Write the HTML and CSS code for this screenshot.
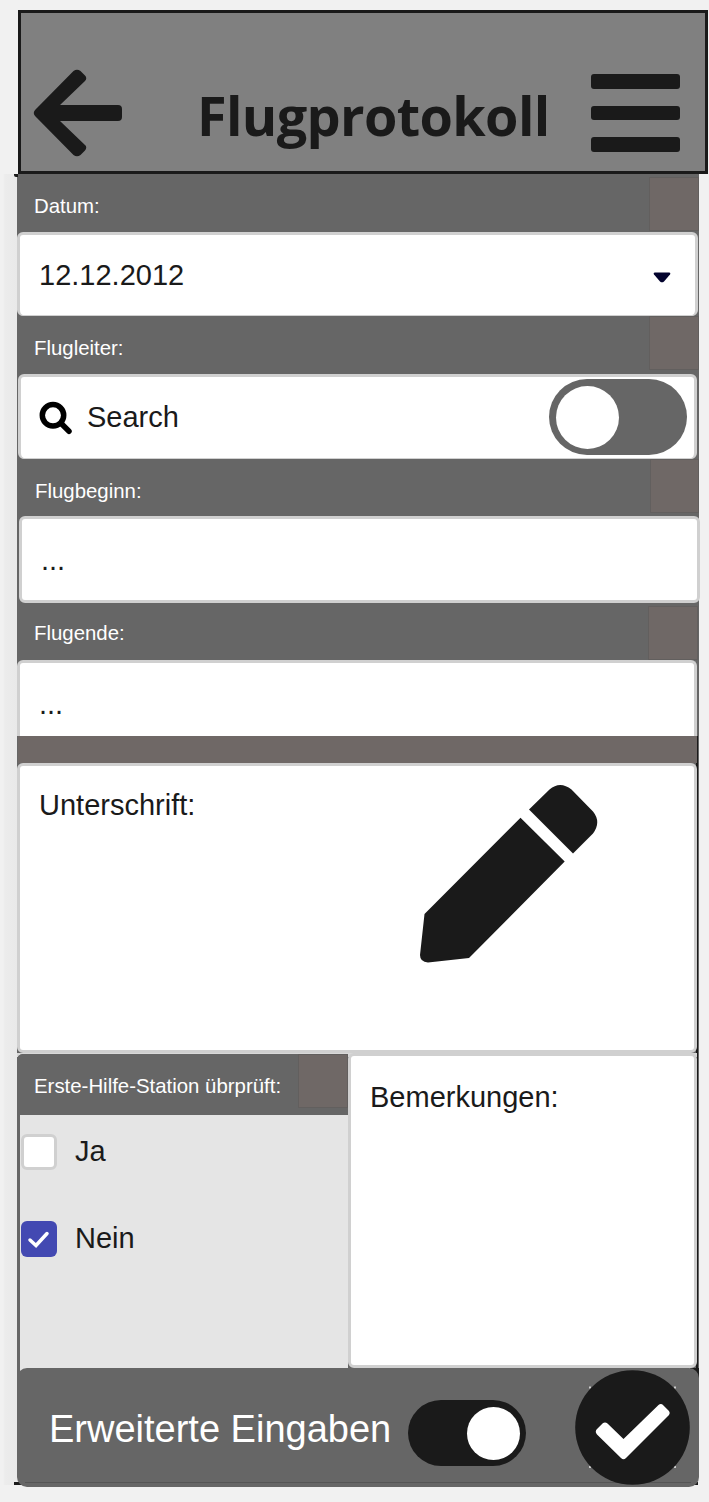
FILE: index.html
```html
<!DOCTYPE html>
<html lang="de">
<head>
<meta charset="utf-8">
<title>Flugprotokoll</title>
<link rel="stylesheet" href="styles.css">
</head>
<body>
<div class="app">
  <header class="header">
    <svg class="back" viewBox="33 68 90 90"><path d="M60 105 85 81Q87.500 78 85 75.500L80.500 71Q77 68.500 73.500 71L35.500 109.500Q32 113 35.500 116.500L73.500 155Q77 157.500 80.500 155L85 150.500Q87.500 147 85 145L60 121H118Q122 121 122 117V109Q122 105 118 105Z"/></svg>
    <h1 class="title">Flugprotokoll</h1>
    <div class="menu"><i class="bar"></i><i class="bar"></i><i class="bar"></i></div>
  </header>
  <main class="form">
    <div class="label label-date"><span>Datum:</span><i class="swatch"></i></div>
    <div class="field field-date"><span>12.12.2012</span>
      <svg class="caret" viewBox="0 0 18 11"><path d="M2 .5H16Q18 .7 17 2.500L11 9.500Q9 11.200 7 9.500L1 2.500Q0 .7 2 .5Z"/></svg>
    </div>
    <div class="label label-lead"><span>Flugleiter:</span><i class="swatch"></i></div>
    <div class="field field-lead">
      <svg class="search" viewBox="0 0 34 34"><circle cx="14" cy="14.300" r="10.700"/><path d="M22 22.300 30 30.300"/></svg>
      <span>Search</span>
      <div class="toggle"><i class="knob"></i></div>
    </div>
    <div class="label label-start"><span>Flugbeginn:</span><i class="swatch"></i></div>
    <div class="field field-start"><span>...</span></div>
    <div class="label label-end"><span>Flugende:</span><i class="swatch"></i></div>
    <div class="field field-end"><span>...</span></div>
    <div class="lower">
      <div class="divider"></div>
      <div class="field signature"><span>Unterschrift:</span>
        <svg class="pencil" viewBox="419 784 180 180"><path d="M424.500 914 520.500 817.800 564.700 861.500 469 958 428 962.500Q420 962 420 955ZM529 809.500 549.500 789.500Q560 780.500 571.500 789.500L593 811.500Q601.500 822 593 833.500L573 853.500Z"/></svg>
      </div>
      <div class="split">
        <section class="aid">
          <div class="label label-aid"><span>Erste-Hilfe-Station übrprüft:</span><i class="swatch"></i></div>
          <div class="options">
            <div class="option"><i class="box"></i><span>Ja</span></div>
            <div class="option"><i class="box checked"><svg viewBox="0 0 36 36"><path d="M9 19 15 24.500 26 12.500"/></svg></i><span>Nein</span></div>
          </div>
        </section>
        <div class="field notes"><span>Bemerkungen:</span></div>
      </div>
    </div>
    <div class="base">
      <footer class="footer">
        <span class="more">Erweiterte Eingaben</span>
        <div class="toggle on"><i class="knob"></i></div>
        <svg class="confirm" viewBox="575 1369.500 115 115"><path class="specks" d="M589 1386h2v2h-2zM674 1386h2v2h-2zM589 1465.500h2v2h-2zM674 1465.500h2v2h-2z"/><circle cx="632.500" cy="1427" r="57.300"/><path class="tick" d="M597 1428.500 602.500 1423Q605 1421 607.500 1423L623.500 1438.500 658.500 1404.500Q661 1402.500 663.500 1405L669 1410.500Q670.500 1412.500 669 1414.500L626 1457.500Q623.500 1460 621 1457.500L597 1434Q594.500 1431 597 1428.500Z"/></svg>
      </footer>
    </div>
  </main>
</div>
</body>
</html>
```
FILE: styles.css
```css
* { box-sizing: border-box; }
body { margin: 0; background: #f1f1f1; font-family: "Liberation Sans", Arial, sans-serif; color: #1a1a1a; }
i { display: block; flex: none; }
svg { display: block; flex: none; }
.app { width: 709px; height: 1502px; padding-top: 10px; overflow: hidden; }
.header { width: 690px; height: 164px; margin-left: 18px; border: 3px solid #1a1a1a; background: #808080; display: flex; align-items: flex-start; padding-left: 12px; }
.back { width: 90px; height: 90px; margin-top: 55px; fill: #1a1a1a; }
.title { width: 347px; margin: 65px 0 0 74px; font: bold 54px/74px "Open Sans", sans-serif; letter-spacing: -.65px; white-space: nowrap; }
.menu { display: flex; flex-direction: column; gap: 17px; margin: 61px 0 0 47px; }
.bar { width: 89px; height: 14.5px; border-radius: 3px; background: #1a1a1a; }
.form { position: relative; width: 699px; padding-left: 17px; background: linear-gradient(90deg, #f1f1f1 0 3px, #ececec 5px, #e9e9e9 17px, #666 17px); }
.form::before { content: ""; position: absolute; left: 14px; top: 0; width: 4px; height: 3px; background: #1a1a1a; border-radius: 0 0 0 2px; }
.label { display: flex; align-items: flex-start; justify-content: space-between; height: 58px; padding-left: 17px; background: #666; color: #fff; font-size: 20.4px; line-height: 24px; white-space: nowrap; }
.label span { margin-top: 20px; }
.swatch { width: 50px; height: 54px; margin-top: 3px; background: #6f6866; border: 1px solid #625f5e; }
.field { display: flex; background: #fff; border: 3px solid #d0d0d0; border-radius: 6px; font-size: 29px; line-height: 34px; padding-left: 19px; white-space: nowrap; }
.field-date { width: 681px; height: 84px; padding-top: 23px; border-bottom-width: 1px; }
.caret { width: 18px; height: 11px; margin: 14px 0 0 auto; margin-right: 24px; fill: #03032e; }
.label-lead .swatch { margin-top: 0; }
.field-lead { width: 679px; height: 85px; margin-left: 1px; padding: 23px 7px 0 18px; border-bottom-width: 1px; }
.search { width: 34px; height: 34px; margin: 1px 14px 0 0; fill: none; stroke: #000; stroke-width: 5.5; stroke-linecap: round; }
.toggle { width: 138px; height: 76px; margin: -21px 0 0 auto; padding: 6.5px; border-radius: 38px; background: #666; }
.knob { width: 63px; height: 63px; border-radius: 50%; background: #fff; }
.label-start { height: 57px; padding-left: 18px; }
.label-start .swatch { margin-top: 0; width: 49px; }
.field-start { width: 681px; height: 87px; margin-left: 2px; padding-top: 24px; }
.label-end { height: 57px; }
.label-end span { margin-top: 18px; }
.label-end .swatch { margin-right: 1px; }
.field-end { width: 680px; height: 76px; padding-top: 24px; border-bottom: 0; border-radius: 6px 6px 0 0; }
.lower { width: 681px; background: linear-gradient(90deg, #666 0 679px, #1a1a1a 679px); }
.divider { width: 679px; height: 27px; margin-left: 1px; background: #6f6866; }
.signature { width: 680px; height: 290px; padding-top: 22px; }
.pencil { width: 180px; height: 180px; margin: -4px 0 0 auto; margin-right: 95px; fill: #1a1a1a; }
.split { display: flex; width: 680px; height: 315px; background: linear-gradient(#d9d9d9 0 4px, transparent 4px); }
.aid { width: 331px; margin-top: 1px; background: #666; border-radius: 6px 0 0 0; }
.label-aid { height: 61px; border-radius: 6px 0 0 0; }
.label-aid .swatch { margin-top: 0; }
.options { height: 253px; margin-left: 3px; padding: 18px 0 0 1px; background: #e5e5e5; display: flex; flex-direction: column; gap: 50px; font-size: 29px; }
.option { display: flex; align-items: center; height: 37px; gap: 18px; }
.box { width: 36px; height: 36px; background: #fff; border: 3px solid #d0d0d0; border-radius: 6px; }
.checked { border: 0; background: #4349b2; }
.checked svg { width: 36px; height: 36px; fill: none; stroke: #fff; stroke-width: 3.5; stroke-linecap: round; }
.notes { width: 349px; height: 315px; padding-top: 24px; }
.base { width: 699px; margin-left: -17px; padding-left: 17px; background: linear-gradient(#1a1a1a, #1a1a1a) 14px 114px / 12px 3px no-repeat, linear-gradient(#1a1a1a, #1a1a1a) 688px 114px / 10px 3px no-repeat, linear-gradient(90deg, transparent 20px, #e5e5e5 20px 690px, #1a1a1a 690px) 0 0 / 699px 12px no-repeat, linear-gradient(90deg, #f1f1f1 3px, #ececec 5px, #e9e9e9 17px, #f1f1f1 26px) 0 12px / 699px 105px no-repeat, linear-gradient(90deg, transparent 17px, #f1f1f1 17px) 0 12px no-repeat, linear-gradient(#f1f1f1, #f1f1f1) 0 117px no-repeat; }
.footer { display: flex; align-items: flex-start; width: 682px; height: 119px; padding-left: 32px; border-radius: 10px; background: linear-gradient(#555, #555) 8px 114px / 666px 1px no-repeat #666; color: #fff; }
.more { width: 359px; margin-top: 39px; font-size: 38px; line-height: 44px; white-space: nowrap; }
.footer .on { width: 118px; height: 66px; margin: 32px 0 0; padding: 6.5px; display: flex; justify-content: flex-end; background: #1a1a1a; }
.on .knob { width: 53px; height: 53px; }
.confirm { width: 115px; height: 115px; margin: 1.5px 0 0 49px; fill: #1a1a1a; }
.tick { fill: #fff; }
.specks { fill: #ccc; }
```
